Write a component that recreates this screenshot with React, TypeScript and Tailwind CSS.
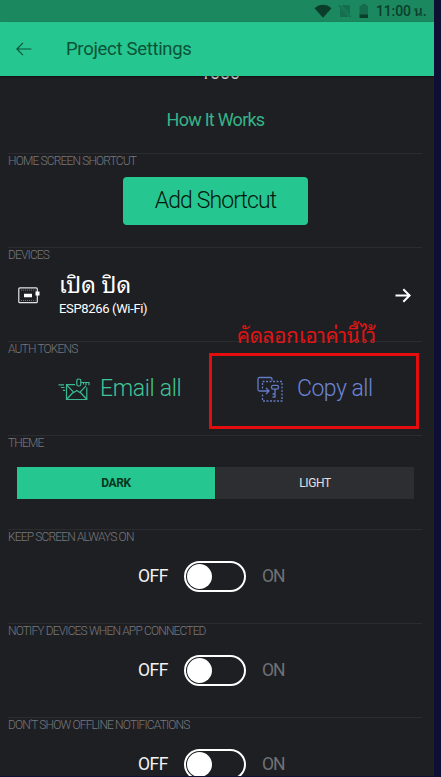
import { useState, type ReactNode } from "react";
import * as Switch from "@radix-ui/react-switch";
import clsx from "clsx";

function StatusBar() {
  return (
    <div className="flex h-[22px] shrink-0 items-center justify-end bg-[#1b8860] pr-[7px] text-[#0a3e2b]">
      <svg width="18" height="14" viewBox="0 0 18 14" className="mr-[6px]">
        <path d="M0.500 4.200C5.500 -0.300 12.500 -0.300 17.500 4.200L9 13.800Z" fill="currentColor" />
      </svg>
      <svg width="14" height="14" viewBox="0 0 14 14" className="mr-[7px]">
        <path d="M4.500 1H12v9.500L3.800 2zM2 4l8.600 9H2z" fill="#156f4e" />
        <path d="M0.800 1.200L12.600 13.300" stroke="#156f4e" strokeWidth="1.300" />
      </svg>
      <svg width="10" height="14" viewBox="0 0 10 14" className="mr-[7px]">
        <path d="M3 0h4v1.500h2V11H0.500V1.500H3z" fill="#166b4c" />
        <path d="M0.500 10.500H9V14H0.500z" fill="currentColor" />
      </svg>
      <span className="w-[51px] text-[14px] leading-none font-medium tracking-[-0.15px] whitespace-nowrap">11:00 น.</span>
    </div>
  );
}

function Header() {
  return (
    <header className="relative z-10 flex h-[54px] shrink-0 items-center bg-[#26c690] pl-[16px] text-[#0b5338] shadow-[0_1px_2px_rgba(0,0,0,0.5)]">
      <button aria-label="Back">
        <svg width="16" height="14" viewBox="0 0 16 14" fill="none" stroke="currentColor" strokeWidth="1.200">
          <path d="M7 0.800L0.900 7L7 13.200M1 7H15.300" />
        </svg>
      </button>
      <h1 className="ml-[34px] pt-[1px] text-[18.500px] tracking-[-0.3px]">Project Settings</h1>
    </header>
  );
}

function Section({ title, children }: { title: string; children: ReactNode }) {
  return (
    <section className="relative ml-[8px] h-[94px] w-[414px] shrink-0 border-t border-[#2b2c30]">
      <h2 className="h-[15px] text-[12px] leading-[14px] font-light tracking-[-0.85px] whitespace-nowrap text-[#77787c]">
        {title}
      </h2>
      {children}
    </section>
  );
}

function DeviceIcon() {
  return (
    <svg width="22" height="17" viewBox="0 0 22 17" fill="none">
      <rect x="0.800" y="0.900" width="18.500" height="14.800" rx="1" stroke="#e4e4e6" strokeWidth="1.200" />
      <path d="M3 3.100H17.500M3 13.500H17.500" stroke="#77777b" strokeDasharray="1 1" />
      <path d="M6 6.700h8v3.500H6zM17.500 4.500h4v4h-4z" fill="#fff" />
    </svg>
  );
}

function EmailIcon() {
  return (
    <svg width="32" height="23" viewBox="0 0 32 23" fill="none" stroke="#3bb98f" strokeWidth="1.200">
      <path d="M17 6.700H8.500V21.500H28.800V9.500M9 7.300L15.800 14.500L18.800 12.500L21.800 14.500L28 7.800M9 21L15.500 14M28.500 21L22 14" />
      <path d="M0.500 6.800H6M3 9.500H6.500M5 12.300H7" />
      <rect x="18.800" y="1" width="4" height="7" rx="1.800" />
      <path d="M23 4.500H31V7.200M28 4.500V7.200M25.500 4.500V6.500" />
    </svg>
  );
}

function CopyIcon() {
  return (
    <svg width="27" height="27" viewBox="0 0 27 27" fill="none" stroke="#637bc6" strokeWidth="1.300">
      <path d="M15 4.500V3Q15 1.500 13.500 1.500H2.500Q1 1.500 1 3V13.500Q1 15 2.500 15H11.500M9 12L12 15L9 18" />
      <path d="M5.500 5.500H25V25H5.500V18M5.500 12.500V5.500" strokeDasharray="2 1.500" />
      <rect x="14.500" y="9.300" width="7" height="3.800" rx="1.700" />
      <path d="M18 13.200V21.500M18 21H15.500M18 18H15.500" />
    </svg>
  );
}

function Toggle({ label }: { label: string }) {
  const [on, setOn] = useState(false);

  return (
    <div className="mt-[16px] flex items-center pl-[130px] text-[17.500px]">
      <span className={clsx("w-[46px] tracking-[-0.5px]", on ? "text-[#77787b]" : "text-[#f2f2f3]")}>OFF</span>
      <Switch.Root
        checked={on}
        onCheckedChange={setOn}
        aria-label={label}
        className="flex h-[31px] w-[62px] items-center rounded-full border-2 border-white px-[1px]"
      >
        <Switch.Thumb className="block size-[25px] rounded-full bg-white data-[state=checked]:translate-x-[31px]" />
      </Switch.Root>
      <span className={clsx("ml-[16px] tracking-[-1px]", on ? "text-[#f2f2f3]" : "text-[#707175]")}>ON</span>
    </div>
  );
}

export default function App() {
  const [theme, setTheme] = useState("dark");

  return (
    <div className="h-[777px] w-[441px] overflow-hidden bg-[#0e0f33] pb-px font-[Roboto,'Noto_Sans_Thai_Looped',Loma,Garuda,Waree,'Leelawadee_UI',Tahoma,sans-serif]">
      <div className="flex h-full w-[434px] flex-col overflow-hidden bg-[#1e1f23]">
        <StatusBar />
        <Header />

        <div className="flex h-[77px] shrink-0 flex-col items-center overflow-hidden pr-[3px]">
          <span className="-mt-[14px] ml-[9px] text-[18px] leading-[22px] tracking-[-0.2px] text-[#d8d8da]">1000</span>
          <button className="mt-[25px] text-[18px] leading-[22px] tracking-[-0.75px] text-[#35b488]">How It Works</button>
        </div>

        <Section title="HOME SCREEN SHORTCUT">
          <button className="mt-[8px] ml-[115px] h-[48px] w-[185px] rounded-[4px] bg-[#26c690] text-[23px] font-light tracking-[-0.9px] text-[#04180f]">
            Add Shortcut
          </button>
        </Section>

        <Section title="DEVICES">
          <button className="mt-[10px] flex w-full items-center pl-[10px] text-left text-white">
            <DeviceIcon />
            <div className="ml-[19px] flex-1">
              <p className="text-[23px] leading-[26px]">เปิด ปิด</p>
              <p className="pt-[1px] text-[13px] leading-[17px] tracking-[-0.35px]">ESP8266 (Wi-Fi)</p>
            </div>
            <svg width="16" height="15" viewBox="0 0 16 15" fill="none" stroke="currentColor" strokeWidth="2" className="mr-[11px]">
              <path d="M0.500 7.500H14.500M8.300 1.200L14.600 7.500L8.300 13.800" />
            </svg>
          </button>
        </Section>

        <Section title="AUTH TOKENS">
          <div className="mt-[16px] flex h-[32px] items-center text-[23px] font-light">
            <button className="ml-[50px] flex w-[125px] items-center text-[#3fc598]">
              <EmailIcon />
              <span className="ml-[10px] tracking-[-0.35px] whitespace-nowrap">Email all</span>
            </button>
            <button className="ml-[74px] flex items-center text-[#6c85d4]">
              <CopyIcon />
              <span className="ml-[13px] tracking-[-0.5px] whitespace-nowrap">Copy all</span>
            </button>
          </div>
          {/* callout around the copy action */}
          <div className="pointer-events-none absolute top-[11px] left-[201px] h-[76px] w-[210px] border-[3px] border-[#e30d0d]" />
          <p className="absolute -top-[20px] left-[229px] text-[20.300px] leading-[28px] whitespace-nowrap text-[#e01414]">
            คัดลอกเอาค่านี้ไว้
          </p>
        </Section>

        <Section title="THEME">
          <div className="mt-[16px] ml-[9px] flex h-[32px] w-[397px] gap-px text-[12px] tracking-[-0.4px]">
            <button
              onClick={() => setTheme("dark")}
              className={clsx("flex-1", theme === "dark" ? "bg-[#26c690] font-bold text-[#07351f]" : "bg-[#2d2e32] text-[#e0e0e2]")}
            >
              DARK
            </button>
            <button
              onClick={() => setTheme("light")}
              className={clsx("flex-1", theme === "light" ? "bg-[#26c690] font-bold text-[#07351f]" : "bg-[#2d2e32] text-[#e0e0e2]")}
            >
              LIGHT
            </button>
          </div>
        </Section>

        <Section title="KEEP SCREEN ALWAYS ON">
          <Toggle label="Keep screen always on" />
        </Section>
        <Section title="NOTIFY DEVICES WHEN APP CONNECTED">
          <Toggle label="Notify devices when app connected" />
        </Section>
        <Section title="DON'T SHOW OFFLINE NOTIFICATIONS">
          <Toggle label="Don't show offline notifications" />
        </Section>
      </div>
    </div>
  );
}
